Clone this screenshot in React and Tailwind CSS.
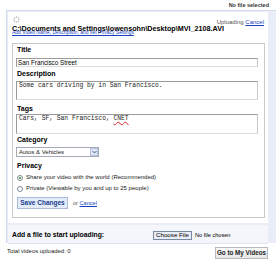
import React from 'react';

const Label = ({ children, className = '' }) => (
  <div className={`pl-[1px] text-[7px] font-bold leading-[10px] text-black ${className}`}>{children}</div>
);

const Radio = ({ checked, children }) => (
  <div className="flex items-center gap-[3px] h-[11px] pl-[1px]">
    <span className="w-[6px] h-[6px] rounded-full border border-[#7a8a99] bg-white flex items-center justify-center">
      {checked && <span className="w-[2px] h-[2px] rounded-full bg-[#2a8a2a]" />}
    </span>
    <span className="text-[6px] text-[#222] whitespace-nowrap">{children}</span>
  </div>
);

const Spinner = () => (
  <svg width="7" height="7" viewBox="0 0 14 14">
    {[0, 1, 2, 3, 4, 5, 6, 7].map(i => {
      const a = (i * Math.PI) / 4;
      return (
        <circle
          key={i}
          cx={7 + Math.cos(a) * 5}
          cy={7 + Math.sin(a) * 5}
          r="1.4"
          fill="#b5b5b5"
        />
      );
    })}
  </svg>
);

const boxInput = 'border border-[#9b9b9b] border-r-[#c8c8c8] border-b-[#dcdcdc]';

export default function App() {
  return (
    <div className="w-[276px] h-[260px] bg-white overflow-hidden font-['Liberation_Sans',Arial,sans-serif]">
      <div className="h-[10px] flex items-center justify-end pr-[7px] text-[5.5px] font-bold text-[#333]">
        No file selected
      </div>

      <div className="ml-[6px] h-[233px] border-t border-l border-[#d3daea] bg-[#e8edf8] pl-[1px] pr-[8px] pt-[1px]">
        <div className="bg-white h-[211px] pl-[4px] pr-[3px] pt-[4px]">
          <div className="flex justify-between h-[6px]">
            <div className="pl-[1px]">
              <Spinner />
            </div>
            <div className="text-[6px] text-[#555] pt-[2px] pr-[1px] whitespace-nowrap">
              Uploading <span className="text-[#1a3fbf] underline">Cancel</span>
            </div>
          </div>
          <div className="relative mt-[2px] h-[19px]">
            <div className="text-[7.2px] font-bold text-black leading-[10px] whitespace-nowrap">
              C:\Documents and Settings\lowensohn\Desktop\MVI_2108.AVI
            </div>
            <div className="absolute left-0 top-[5px] text-[5px] text-[#1a3fbf] underline leading-[6px] whitespace-nowrap">
              Add Video Name, Description, and set Privacy Settings
            </div>
          </div>

          <div className="h-[175px] border border-[#c9c9c9] pl-[3px] pr-[6px] pt-[1px]">
            <Label>Title</Label>
            <div className={`mt-[3px] h-[9px] ${boxInput} text-[6.3px] leading-[7px] pl-[1px] text-black`}>
              San Francisco Street
            </div>
            <Label className="mt-[2px]">Description</Label>
            <div className={`mt-[2px] h-[19px] ${boxInput} font-['Liberation_Mono',monospace] text-[6.3px] leading-[8px] pl-[2px] text-[#222]`}>
              Some cars driving by in San Francisco.
            </div>
            <Label className="mt-[4px]">Tags</Label>
            <div className={`h-[20px] ${boxInput} font-['Liberation_Mono',monospace] text-[6.3px] leading-[8px] pl-[2px] text-[#222]`}>
              Cars, SF, San Francisco,{' '}
              <span className="underline decoration-wavy decoration-[#e02020] decoration-[0.5px]">CNET</span>
            </div>
            <Label className="mt-[1px]">Category</Label>
            <div className="mt-[2px] w-[83px] h-[10px] border border-[#a5acb5] flex items-center justify-between">
              <span className="text-[6px] pl-[2px] text-[#222]">Autos &amp; Vehicles</span>
              <span className="w-[8px] h-[8px] bg-[#dfe7f6] border border-[#b5c3de] flex items-center justify-center">
                <svg width="5" height="4" viewBox="0 0 5 4">
                  <path d="M0.5 1 L2.5 3 L4.5 1" fill="none" stroke="#4d6185" strokeWidth="1" />
                </svg>
              </span>
            </div>
            <Label className="mt-[4px]">Privacy</Label>
            <div className="mt-[1px]">
              <Radio checked>Share your video with the world (Recommended)</Radio>
              <Radio>Private (Viewable by you and up to 25 people)</Radio>
            </div>
            <div className="mt-[3px] pl-[1px] flex items-center gap-[5px]">
              <div className="w-[51px] h-[12px] border border-[#aabbd8] bg-[#e4ecfa] flex items-center justify-center text-[6.5px] font-bold text-[#1b3f8f] whitespace-nowrap">
                Save Changes
              </div>
              <span className="text-[5.6px] text-[#555]">
                or <span className="text-[#1a3fbf] underline">Cancel</span>
              </span>
            </div>
          </div>
        </div>

        <div className="mt-[2px] h-[19px] bg-[#f4f6fc] border-b border-[#dde3f2] flex items-center pl-[4px] pt-[2px]">
          <span className="w-[141px] text-[6.8px] font-bold text-black whitespace-nowrap">Add a file to start uploading:</span>
          <div className="h-[9px] px-[2px] border border-[#7a8aa5] bg-[#e9edf5] flex items-center text-[6.2px] text-black whitespace-nowrap">
            Choose File
          </div>
          <span className="ml-[3px] text-[5.6px] text-black whitespace-nowrap">No file chosen</span>
        </div>
      </div>

      <div className="flex items-center justify-between pl-[7px] pr-[8px] h-[17px]">
        <span className="text-[5.9px] text-[#222]">Total videos uploaded: 0</span>
        <div className="mt-[2px] h-[12px] w-[53px] border border-[#b4b9c2] bg-gradient-to-b from-[#fafafa] to-[#e6e6e6] flex items-center justify-center text-[6.3px] font-bold text-[#222] whitespace-nowrap">
          Go to My Videos
        </div>
      </div>
    </div>
  );
}
